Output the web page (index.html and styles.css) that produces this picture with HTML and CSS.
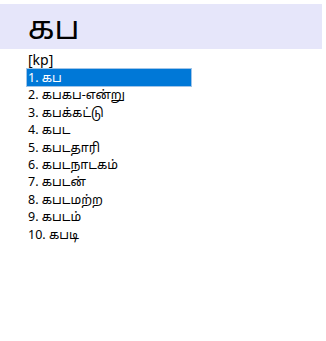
FILE: index.html
```html
<!DOCTYPE html>
<html lang="ta">
<head>
    <meta charset="UTF-8">
    <meta name="viewport" content="width=device-width, initial-scale=1.0">
    <title>கப</title>
    <link rel="stylesheet" href="styles.css">
</head>
<body>
    <div class="page">
        <!-- தலைப்பு -->
        <h1 class="word-title">கப</h1>

        <div class="entry">
            <div class="translit">[kp]</div>
            <ul class="word-list">
                <li class="word-item selected">1. கப</li>
                <li class="word-item">2. கபகப-என்று</li>
                <li class="word-item">3. கபக்கட்டு</li>
                <li class="word-item">4. கபட</li>
                <li class="word-item">5. கபடதாரி</li>
                <li class="word-item">6. கபடநாடகம்</li>
                <li class="word-item">7. கபடன்</li>
                <li class="word-item">8. கபடமற்ற</li>
                <li class="word-item">9. கபடம்</li>
                <li class="word-item">10. கபடி</li>
            </ul>
        </div>
    </div>
</body>
</html>
```

FILE: styles.css
```css
body {
    font-family: "Noto Sans", "Noto Sans Tamil", "DejaVu Sans", sans-serif;
    margin: 0;
    padding: 0;
    background-color: #fff;
    color: #000;
}
.page {
    padding-top: 4px;
}
.word-title {
    margin: 0;
    width: 322px;
    height: 45px;
    box-sizing: border-box;
    padding-left: 28px;
    background: #e6e6fa;
    font-size: 32px;
    font-weight: normal;
    line-height: 45px;
}
.entry {
    padding-left: 27px;
}
.translit {
    font-size: 14px;
    line-height: 18px;
    margin-top: 2px;
    padding-left: 1px;
}
.word-list {
    list-style: none;
    margin: 0;
    padding: 0;
    width: 164px;
}
.word-item {
    font-size: 12.5px;
    line-height: 17.4px;
    padding-left: 1px;
    white-space: nowrap;
}
.selected {
    background: #0078d7;
    color: #fff;
    outline: 1px solid #a0c4e8;
}
```
